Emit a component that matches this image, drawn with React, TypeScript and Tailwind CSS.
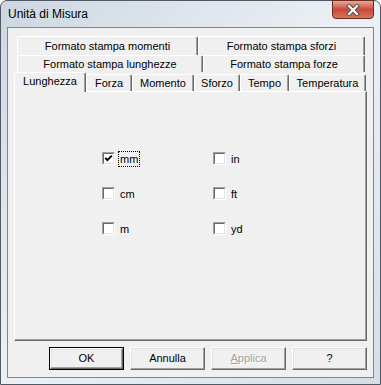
const font = { fontFamily: '"Liberation Sans", Arial, sans-serif' }

interface TabProps {
  label: string
  w: number
  selected?: boolean
  className?: string
}

function Tab({ label, selected, className }: TabProps) {
  return (
    <div
      className={`flex items-center justify-center rounded-t-[2px] border-l border-t border-r border-l-white border-t-white border-r-[#696969] shadow-[inset_-1px_0_#a0a0a0] bg-[#f0f0f0] text-[11px] leading-none text-black ${
        selected ? 'relative z-10 h-[20px] -mb-px' : 'h-full'
      } ${className ?? ''}`}
    >
      <span className={selected ? '-mt-[3px]' : ''}>{label}</span>
    </div>
  )
}

function Checkbox({ label, checked, focused }: { label: string; checked?: boolean; focused?: boolean }) {
  return (
    <div className="flex items-center h-[13px]">
      <div className="w-[13px] h-[13px] shrink-0 border border-t-[#a0a0a0] border-l-[#a0a0a0] border-b-white border-r-white">
        <div className="w-[11px] h-[11px] bg-white border border-t-[#696969] border-l-[#696969] border-b-[#e3e3e3] border-r-[#e3e3e3] flex items-center justify-center">
          {checked && (
            <svg width="9" height="9" viewBox="0 0 9 9">
              <path d="M1.2 3.8 L3.4 6.2 L7.8 1.6" fill="none" stroke="#000" strokeWidth="1.9" />
            </svg>
          )}
        </div>
      </div>
      <span
        className={`ml-[3px] px-[1px] text-[11px] leading-[14px] text-black border ${
          focused ? 'border-dotted border-black' : 'border-transparent'
        }`}
      >
        {label}
      </span>
    </div>
  )
}

function Button({ label, isDefault, disabled }: { label: string; isDefault?: boolean; disabled?: boolean }) {
  const body = (
    <div className="w-full h-full border border-t-white border-l-white border-b-[#696969] border-r-[#696969] shadow-[inset_-1px_-1px_#a0a0a0,inset_1px_1px_#e3e3e3] flex items-center justify-center bg-[#f0f0f0]">
      {disabled ? (
        <span className="text-[11px] text-[#a0a0a0] [text-shadow:1px_1px_0_#fff]">
          <span className="underline">A</span>pplica
        </span>
      ) : (
        <span className="text-[11px] text-black">{label}</span>
      )}
    </div>
  )
  return (
    <div className={`w-[75px] h-[23px] ${isDefault ? 'border border-black' : ''}`}>{body}</div>
  )
}

export default function App() {
  return (
    <div
      className="relative w-[381px] h-[385px] flex flex-col rounded-t-[7px] border border-[#505a66] bg-gradient-to-br from-[#cdd7e1] via-[#edf1f5] to-[#d5dee7]"
      style={font}
    >
      {/* title bar */}
      <div className="h-[26px] flex items-center pl-[7px] text-[12px] text-black">Unità di Misura</div>
      <div className="absolute -top-px right-[6px] w-[42px] h-[19px] rounded-b-[4px] border border-[#6b2a22] bg-gradient-to-b from-[#e8a898] via-[#c84a3a] to-[#d9735c] flex items-center justify-center">
        <svg width="14" height="12" viewBox="0 0 14 12">
          <path d="M3 2 L11 10 M11 2 L3 10" stroke="#4a4a4a" strokeWidth="4" strokeLinecap="square" />
          <path d="M3 2 L11 10 M11 2 L3 10" stroke="#fff" strokeWidth="2.2" strokeLinecap="square" />
        </svg>
      </div>

      {/* client area */}
      <div className="mx-[6px] h-[351px] border border-[#7d8791] bg-[#f0f0f0] pt-[8px] px-[6px]">
        <div className="flex flex-col">
          <div className="flex h-[19px] ml-[3px] mr-[2px]">
            <Tab label="Formato stampa momenti" w={181} className="w-[181px]" />
            <Tab label="Formato stampa sforzi" w={167} className="flex-1" />
          </div>
          <div className="flex h-[17px] ml-[3px] mr-[2px]">
            <Tab label="Formato stampa lunghezze" w={186} className="w-[186px]" />
            <Tab label="Formato stampa forze" w={162} className="flex-1" />
          </div>
          <div className="flex items-end h-[19px] mr-[1px]">
            <Tab label="Lunghezza" w={72} selected className="w-[72px]" />
            <div className="flex h-[17px] flex-1">
              <Tab label="Forza" w={46} className="w-[46px]" />
              <Tab label="Momento" w={62} className="w-[62px]" />
              <Tab label="Sforzo" w={46} className="w-[46px]" />
              <Tab label="Tempo" w={49} className="w-[49px]" />
              <Tab label="Temperatura" w={76} className="flex-1" />
            </div>
          </div>
        </div>

        <div className="h-[250px] border border-t-white border-l-white border-b-[#696969] border-r-[#696969] shadow-[inset_-1px_-1px_#a0a0a0] pl-[87px] pt-[60px]">
          <div className="grid grid-cols-[111px_auto] gap-y-[22px]">
            <Checkbox label="mm" checked focused />
            <Checkbox label="in" />
            <Checkbox label="cm" />
            <Checkbox label="ft" />
            <Checkbox label="m" />
            <Checkbox label="yd" />
          </div>
        </div>

        <div className="mt-[6px] flex justify-end gap-[6px]">
          <Button label="OK" isDefault />
          <Button label="Annulla" />
          <Button label="Applica" disabled />
          <Button label="?" />
        </div>
      </div>
    </div>
  )
}
